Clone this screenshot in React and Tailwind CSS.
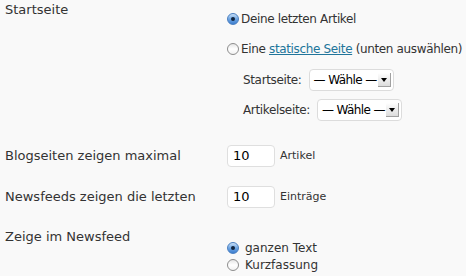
const FONT = "font-['DejaVu_Sans',sans-serif]";

function Radio({ checked }) {
  if (checked) {
    return (
      <span className="flex h-[12px] w-[12px] shrink-0 items-center justify-center rounded-full border border-[#4a7fc0] bg-gradient-to-b from-[#c9e0f7] via-[#6fa6e3] to-[#3d7fd0]">
        <span className="h-[4px] w-[4px] rounded-full bg-[#10243f]" />
      </span>
    );
  }
  return (
    <span className="h-[12px] w-[12px] shrink-0 rounded-full border border-[#8d8d8d] bg-gradient-to-b from-[#e6e6e6] via-white to-[#f2f2f2]" />
  );
}

function Select() {
  return (
    <span className="flex h-[22px] items-center rounded-[4px] border border-[#dcdcdc] bg-white pl-[4px] pr-[2px]">
      <span className="text-[12px] leading-[14px] tracking-[-0.6px] text-black">— Wähle —</span>
      <span className="ml-[1px] flex h-[14px] w-[13px] items-center justify-center border-b border-r border-[#a0a0a0] bg-gradient-to-b from-white to-[#dcdcdc]">
        <span className="h-0 w-0 border-l-[3px] border-r-[3px] border-t-[4px] border-l-transparent border-r-transparent border-t-black" />
      </span>
    </span>
  );
}

function NumberInput({ value }) {
  return (
    <span className="flex h-[22px] w-[48px] shrink-0 items-center rounded-[4px] border border-[#dfdfdf] bg-white px-[5px] text-[13px] text-black">
      {value}
    </span>
  );
}

export default function App() {
  return (
    <div className={`h-[276px] w-[466px] overflow-hidden bg-[#f9f9f9] px-[5px] text-[13px] text-[#333] ${FONT}`}>
      {/* Startseite */}
      <div className="flex h-[130px]">
        <div className="w-[222px] shrink-0 pt-[3px] leading-[14px]">Startseite</div>
        <div className="flex flex-col whitespace-nowrap pt-[4px] text-[12px] tracking-[-0.35px]">
          <label className="flex h-[30px] items-center gap-[2px]">
            <Radio checked />
            <span>Deine letzten Artikel</span>
          </label>
          <label className="flex h-[29px] items-center gap-[2px]">
            <Radio />
            <span>
              Eine <a className="text-[#21759b] underline">statische Seite</a> (unten auswählen)
            </span>
          </label>
          <div className="mt-[2px] flex flex-col pl-[16px]">
            <div className="flex h-[30px] items-center gap-[7px]">
              <span>Startseite:</span>
              <Select />
            </div>
            <div className="flex h-[30px] items-center gap-[7px]">
              <span>Artikelseite:</span>
              <Select />
            </div>
          </div>
        </div>
      </div>

      {/* Blogseiten */}
      <div className="mt-[10px] flex h-[32px] items-center">
        <div className="w-[222px] shrink-0">Blogseiten zeigen maximal</div>
        <NumberInput value="10" />
        <span className="ml-[5px] text-[11px]">Artikel</span>
      </div>

      {/* Newsfeeds */}
      <div className="mt-[9px] flex h-[32px] items-center">
        <div className="w-[222px] shrink-0">Newsfeeds zeigen die letzten</div>
        <NumberInput value="10" />
        <span className="ml-[5px] text-[11px]">Einträge</span>
      </div>

      {/* Zeige im Newsfeed */}
      <div className="mt-[16px] flex">
        <div className="w-[222px] shrink-0 leading-[16px]">Zeige im Newsfeed</div>
        <div className="flex flex-col pt-[10px] text-[12px]">
          <label className="flex h-[17px] items-center gap-[6px]">
            <Radio checked />
            <span>ganzen Text</span>
          </label>
          <label className="flex h-[17px] items-center gap-[6px]">
            <Radio />
            <span>Kurzfassung</span>
          </label>
        </div>
      </div>
    </div>
  );
}
